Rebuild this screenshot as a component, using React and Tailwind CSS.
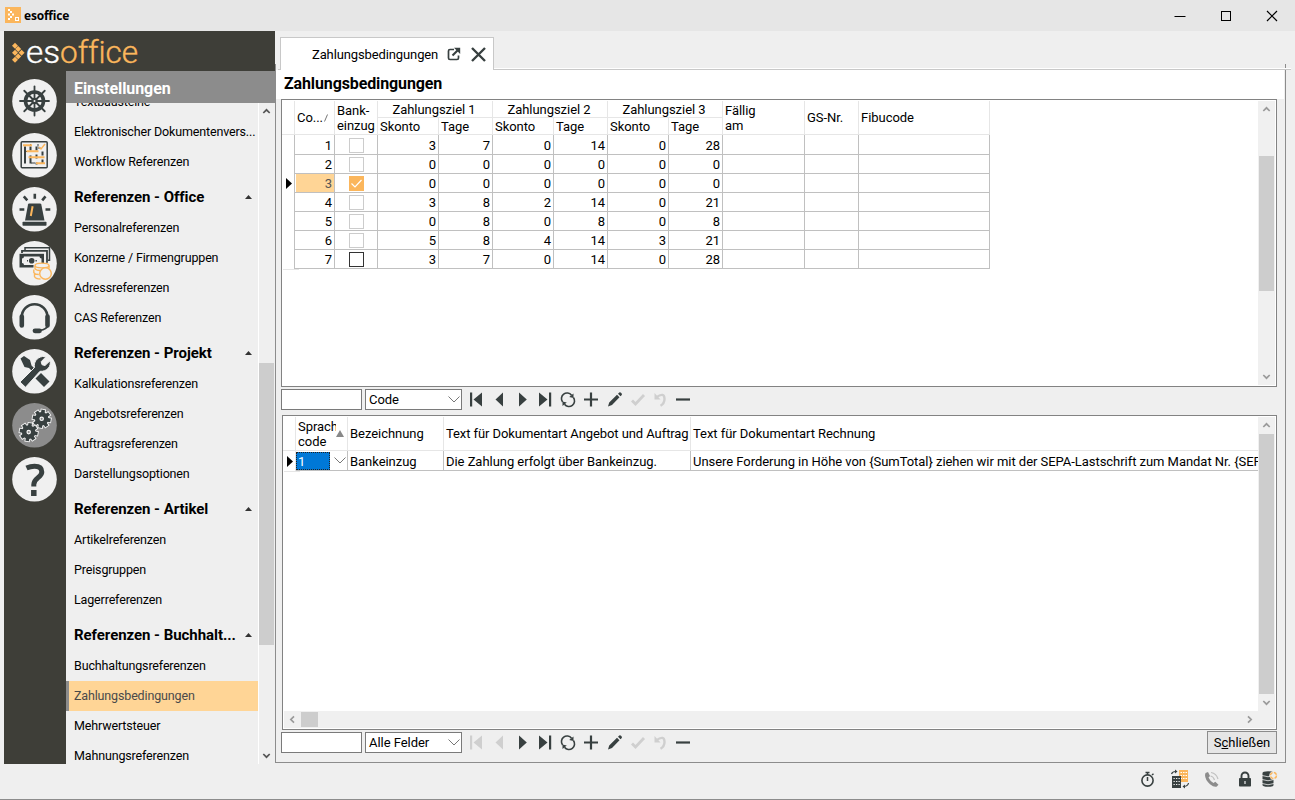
import React from "react";
import clsx from "clsx";

const DARK = "#384040";
const ORANGE = "#fbb65c";

// Menu entries of the settings sidebar
const menu = [
  { label: "Textbausteine" },
  { label: "Elektronischer Dokumentenvers..." },
  { label: "Workflow Referenzen" },
  { label: "Referenzen - Office", head: true },
  { label: "Personalreferenzen" },
  { label: "Konzerne / Firmengruppen" },
  { label: "Adressreferenzen" },
  { label: "CAS Referenzen" },
  { label: "Referenzen - Projekt", head: true },
  { label: "Kalkulationsreferenzen" },
  { label: "Angebotsreferenzen" },
  { label: "Auftragsreferenzen" },
  { label: "Darstellungsoptionen" },
  { label: "Referenzen - Artikel", head: true },
  { label: "Artikelreferenzen" },
  { label: "Preisgruppen" },
  { label: "Lagerreferenzen" },
  { label: "Referenzen - Buchhalt...", head: true },
  { label: "Buchhaltungsreferenzen" },
  { label: "Zahlungsbedingungen", active: true },
  { label: "Mehrwertsteuer" },
  { label: "Mahnungsreferenzen" },
];

// code, skonto/tage 1, skonto/tage 2, skonto/tage 3
const rows = [
  [1, 3, 7, 0, 14, 0, 28],
  [2, 0, 0, 0, 0, 0, 0],
  [3, 0, 0, 0, 0, 0, 0],
  [4, 3, 8, 2, 14, 0, 21],
  [5, 0, 8, 0, 8, 0, 8],
  [6, 5, 8, 4, 14, 3, 21],
  [7, 3, 7, 0, 14, 0, 28],
];

const COLS = "grid grid-cols-[13px_40px_43px_61px_54px_61px_54px_61px_54px_82px_54px_131px]";

function Wheel() {
  return (
    <g stroke={DARK} fill="none">
      {[0, 45, 90, 135].map((a) => (
        <path key={a} d="M22.5 8v29" strokeWidth="1.8" strokeLinecap="round" transform={`rotate(${a} 22.5 22.5)`} />
      ))}
      <circle cx="22.5" cy="22.5" r="9" strokeWidth="3.600" />
      <circle cx="22.5" cy="22.5" r="3.200" fill={DARK} stroke="none" />
      <circle cx="22.5" cy="22.5" r="1" fill="#f0f0f0" stroke="none" />
    </g>
  );
}

function Planner() {
  return (
    <g fill="none">
      <rect x="9.2" y="9.2" width="26" height="26" rx="1" stroke={DARK} strokeWidth="1.5" />
      <path d="M13 14v17M18.5 14v4M18.5 23v8M24.5 14v4M24.5 22v4M30.5 19v4M30.5 27v4M24.5 30v2" stroke={DARK} strokeWidth="2" />
      <path d="M18.5 11.5v2M26 11.5v2.5M26 15.5h2.5M12 19h4M19 30.5h4" stroke={DARK} strokeWidth="1" />
      <path d="M11 12.8h9M14.500 18.700h12M16.500 24.800h16M24 30.800h9" stroke={ORANGE} strokeWidth="2" />
      <path d="M27 14.500l2 2 4-5" stroke={ORANGE} strokeWidth="1.500" />
    </g>
  );
}

function Siren() {
  return (
    <g fill={DARK}>
      <path d="M17 17h11q1 0 1.300 1L32.500 34h-19.500L16 18q.2-1 1-1z" />
      <rect x="10.500" y="35.300" width="24" height="4" rx="0.800" />
      <path d="M18.800 29.500L20.600 19.800" stroke={ORANGE} strokeWidth="2" />
      <path d="M22.800 7.300v5M11.800 9.800l3.500 4M33.500 9.800l-3.300 4M7.500 23h4.800M33.500 23h4.800" stroke={DARK} strokeWidth="2.600" />
    </g>
  );
}

function Money() {
  return (
    <g fill="none">
      <path d="M13 9.700v-2.500h24.500v12.500h-1.500" stroke={DARK} strokeWidth="1.500" />
      <path d="M10 12.500v-2.200h25v12" stroke={DARK} strokeWidth="1.800" />
      <rect x="7.500" y="13.300" width="24.500" height="13.700" fill={DARK} />
      <path d="M12 16h15.500q0 2 2 2v4.500q-2 0-2 2H12q0-2-2-2V18q2 0 2-2z" fill="#f0f0f0" />
      <circle cx="19.700" cy="20.200" r="2.800" fill={DARK} />
      <path d="M15 20.200h1M23.500 20.200h1.300" stroke={DARK} strokeWidth="1.500" />
      <path d="M21.500 25q0-2.500 7-2.500t7 2.500v12q-4 2-8 1.500-6-.5-6-2z" fill="#f0f0f0" />
      <ellipse cx="30" cy="25" rx="7" ry="2.300" stroke={ORANGE} strokeWidth="1.300" />
      <path d="M23 25v3q1 2 5 2M21.800 29v3q1 2 5 2M22.500 33v3q1 2.500 6 2.500M37 25v3" stroke={ORANGE} strokeWidth="1.400" />
      <circle cx="33.500" cy="33" r="5.800" stroke={ORANGE} strokeWidth="1.400" fill="#f0f0f0" />
    </g>
  );
}

function Headset() {
  return (
    <g fill="none" stroke={DARK}>
      <path d="M9.800 27V22.500a12.800 12.800 0 0 1 25.600 0V27" strokeWidth="2.600" />
      <path d="M9.800 22v9M35.500 22v9" strokeWidth="4.600" strokeLinecap="round" />
      <path d="M36 31q-1.500 4-8 4.800" strokeWidth="1.800" />
      <path d="M23 36.300h4.500" strokeWidth="4.800" strokeLinecap="round" />
    </g>
  );
}

function Tools() {
  return (
    <g fill={DARK}>
      <path d="M8.500 10l3.500-2.500 6 4 1.500 5.500 4 4-2.500 2.500-4-4-4.500-1z" />
      <path d="M29 24.500l8.500 8.500-5.500 5.500-8.500-8.500z" />
      <path
        d="M8 33.500l14.500-14.500c-1-5 2-10 8-11l3.500.2-4.800 5 .8 3 3 .8 5-4.700c1.500 5.500-3 11-10 10.500L13.500 38.800z"
        stroke="#f0f0f0"
        strokeWidth="1"
      />
    </g>
  );
}

function Gear({ x, y, r }) {
  return (
    <g transform={`translate(${x} ${y})`}>
      <g stroke="#f5f5f5" strokeWidth="1.800" fill="#f5f5f5">
        {[0, 45, 90, 135].map((a) => (
          <rect key={a} x="-1.800" y={-r} width="3.600" height={r * 2} transform={`rotate(${a + 10})`} />
        ))}
        <circle r={r - 2.2} />
      </g>
      <g fill={DARK}>
        {[0, 45, 90, 135].map((a) => (
          <rect key={a} x="-1.800" y={-r} width="3.600" height={r * 2} transform={`rotate(${a + 10})`} />
        ))}
        <circle r={r - 2.2} />
      </g>
      <circle r="1.700" fill="#8c8c8c" stroke="#f5f5f5" strokeWidth="1.200" />
    </g>
  );
}

function Gears() {
  return (
    <g>
      <Gear x={29.7} y={16.3} r={9} />
      <Gear x={16.7} y={29.6} r={9} />
    </g>
  );
}

function Question() {
  return (
    <g fill="none" stroke={DARK} strokeWidth="5">
      <path d="M14.500 11.500q4-1.800 8-1.800c5 0 7.300 2.200 7.300 5.800 0 5.500-8 6-8 12.500v2" />
      <path d="M21.800 33.500v6" strokeWidth="5.500" />
    </g>
  );
}

const modules = [Wheel, Planner, Siren, Money, Headset, Tools, Gears, Question];

function Arrow({ dir, color = "#9a9a9a" }) {
  const rot = { up: 0, right: 90, down: 180, left: 270 }[dir];
  return (
    <svg width="9" height="9" viewBox="0 0 9 9" fill="none">
      <path d="M1.300 6l3.200-3.200L7.700 6" stroke={color} strokeWidth="1.700" transform={`rotate(${rot} 4.500 4.500)`} />
    </svg>
  );
}

function Sidebar() {
  return (
    <aside className="flex h-[733px] w-[271px] shrink-0 flex-col bg-[#3e3e38]">
      <div className="h-10 shrink-0">
        <svg width="271" height="40" viewBox="0 0 271 40">
          <g fill={ORANGE}>
            {[[11, 14.8], [14.2, 18], [17.6, 21.8], [11, 21.8], [14.2, 25.4], [11, 28.8]].map(([x, y]) => (
              <rect key={`${x}-${y}`} x={x - 2.1} y={y - 2.1} width="4.200" height="4.200" transform={`rotate(45 ${x} ${y})`} />
            ))}
          </g>
          <text x="22" y="31.500" fontSize="32" fontFamily="Roboto" fontWeight="300" fill="#ffffff" stroke="#ffffff" strokeWidth="0.400" textLength="34" lengthAdjust="spacingAndGlyphs">es</text>
          <text x="56" y="31.500" fontSize="32" fontFamily="Roboto" fontWeight="300" fill={ORANGE} stroke={ORANGE} strokeWidth="0.400" textLength="78" lengthAdjust="spacingAndGlyphs">office</text>
        </svg>
      </div>
      <div className="flex min-h-0 flex-1">
        <nav className="flex w-[62px] shrink-0 flex-col gap-[9px] pt-2 pl-2">
          {modules.map((Icon, i) => (
            <svg key={i} width="45" height="45" viewBox="0 0.500 45 45">
              <circle cx="22.500" cy="22.800" r="22.300" fill={i === 6 ? "#8c8c8c" : "#f0f0f0"} />
              <Icon />
            </svg>
          ))}
        </nav>
        <div className="flex w-[210px] shrink-0 flex-col bg-[#efefef]">
          <div className="flex h-8 shrink-0 items-center bg-[#8c8c8c] pt-1 pl-2 text-base font-bold tracking-[-0.08px] text-white">Einstellungen</div>
          <div className="flex min-h-0 flex-1">
            <ul className="flex w-48 flex-col overflow-hidden">
              {menu.map((m, i) =>
                m.head ? (
                  <li key={m.label} className="flex h-9 shrink-0 items-center justify-between pt-1 pr-1.5 pl-2 text-[15px] font-bold">
                    <span className="whitespace-nowrap">{m.label}</span>
                    <svg width="7" height="4" viewBox="0 0 7 4"><path d="M0 4L3.500 0 7 4z" fill="#333" /></svg>
                  </li>
                ) : (
                  <li
                    key={m.label}
                    className={clsx(
                      "flex h-[30px] shrink-0 items-center text-[12.5px] tracking-[-0.15px] whitespace-nowrap",
                      i === 0 && "-mt-4",
                      m.active ? "border-l-[3px] border-[#8c8c8c] bg-[#ffd596] pl-[5px] text-[#4a4a4a]" : "pl-2"
                    )}
                  >
                    {m.label}
                  </li>
                )
              )}
            </ul>
            <div className="flex w-[17px] flex-col border-l border-white">
              <div className="flex h-[17px] items-center pl-[3px]"><Arrow dir="up" color="#555" /></div>
              <div className="mt-[243px] h-[282px] w-[15px] bg-[#cdcdcd]" />
              <div className="mt-auto flex h-[17px] items-center pl-[3px]"><Arrow dir="down" color="#555" /></div>
            </div>
          </div>
        </div>
      </div>
    </aside>
  );
}

function Check({ checked, strong }) {
  if (checked) {
    return (
      <svg width="15" height="15" viewBox="0 0 15 15" fill="none">
        <rect width="15" height="15" fill={ORANGE} />
        <path d="M2.500 7.500l3.500 3.500 6.500-7" stroke="#fff" strokeWidth="1.200" />
      </svg>
    );
  }
  return <span className={clsx("h-[15px] w-[15px] border bg-white", strong ? "border-[#333]" : "border-[#cccccc]")} />;
}

function Hd({ className, children }) {
  return <div className={clsx("border-r border-b border-[#e6e6e6]", className)}>{children}</div>;
}

function TermsGrid() {
  return (
    <div className="flex h-[288px] w-[996px] border border-[#828282] bg-white">
      <div className="min-w-0 flex-1 pt-px">
        <div className={clsx(COLS, "h-[34px] grid-rows-[17px_17px] leading-[15px]")}>
          <Hd className="row-span-2" />
          <Hd className="row-span-2 flex items-center gap-px pl-0.5">
            <span>Co...</span>
            <svg width="4" height="8" viewBox="0 0 4 8"><path d="M.5 7.500L3.500.5" stroke="#777" /></svg>
          </Hd>
          <Hd className="row-span-2 pt-0.5 pl-0.5">Bank-<br />einzug</Hd>
          {[1, 2, 3].map((n) => (
            <Hd key={n} className="col-span-2 pt-px pr-0.5 text-center">Zahlungsziel {n}</Hd>
          ))}
          <Hd className="row-span-2 pt-0.5 pl-0.5">Fällig<br />am</Hd>
          <Hd className="row-span-2 flex items-center pl-0.5">GS-Nr.</Hd>
          <Hd className="row-span-2 flex items-center pl-0.5">Fibucode</Hd>
          {[1, 2, 3].map((n) => (
            <React.Fragment key={n}>
              <Hd className="pt-px pl-0.5">Skonto</Hd>
              <Hd className="pt-px pl-0.5">Tage</Hd>
            </React.Fragment>
          ))}
        </div>
        {rows.map((r, i) => (
          <div key={r[0]} className={clsx(COLS, i === 0 ? "h-5" : "h-[19px]")}>
            <div className="flex items-center border-r border-[#c0c0c0] pl-1">
              {r[0] === 3 && <svg width="6" height="11" viewBox="0 0 6 11"><path d="M0 0l6 5.500L0 11z" fill="#000" /></svg>}
            </div>
            <div className="flex border-r border-b border-[#c0c0c0] pl-px">
              <div className={clsx("flex flex-1 items-end justify-end pr-0.5 leading-[17px]", r[0] === 3 && "bg-[#ffd596] text-[#555]")}>{r[0]}</div>
            </div>
            <div className="flex items-end justify-center border-r border-b border-[#c0c0c0] pb-px">
              <Check checked={r[0] === 3} strong={r[0] === 7} />
            </div>
            {r.slice(1).map((v, c) => (
              <div key={c} className="flex items-end justify-end border-r border-b border-[#c0c0c0] pr-0.5 leading-[17px]">{v}</div>
            ))}
            <div className="border-r border-b border-[#c0c0c0]" />
            <div className="border-r border-b border-[#c0c0c0]" />
            <div className="border-r border-b border-[#c0c0c0]" />
          </div>
        ))}
        <div className="ml-px h-px w-4 bg-[#e6e6e6]" />
      </div>
      <div className="my-px mr-px flex w-[17px] flex-col items-center bg-[#f0f0f0]">
        <div className="flex h-[17px] items-center"><Arrow dir="up" /></div>
        <div className="mt-[38px] h-[135px] w-[15px] bg-[#cdcdcd]" />
        <div className="mt-auto flex h-[17px] items-center"><Arrow dir="down" /></div>
      </div>
    </div>
  );
}

function Ico({ x, off, children }) {
  const col = off ? "#cfcfcf" : DARK;
  return (
    <g transform={`translate(${x} 10.500)`} fill={col} stroke={col} strokeWidth="0">
      {children}
    </g>
  );
}

function Toolbar({ field, atStart }) {
  return (
    <div className="flex items-center">
      <input className="h-[21px] w-[81px] border border-[#7a7a7a] bg-white" />
      <div className="ml-[3px] flex h-[21px] w-[97px] items-center justify-between border border-[#7a7a7a] bg-white pr-px pl-[3px]">
        <span>{field}</span>
        <svg width="12" height="7" viewBox="0 0 12 7" fill="none"><path d="M.5.5L6 6 11.500.5" stroke="#777" /></svg>
      </div>
      <svg className="ml-1" width="230" height="21" viewBox="466 0 230 21">
        <Ico x={477} off={atStart}><path d="M-7-7h2.200V7h-2.200zM5-7V7L-3.500 0z" /></Ico>
        <Ico x={499.5} off={atStart}><path d="M3.500-7V7L-4 0z" /></Ico>
        <Ico x={522.5}><path d="M-3.500-7V7L4.300 0z" /></Ico>
        <Ico x={545}><path d="M-6-7V7L2.500 0zM4-7h2.200V7H4z" /></Ico>
        <Ico x={568}>
          <g fill="none" strokeWidth="1.600">
            <path d="M-5.400 2.500A5.600 5.600 0 0 1 3.500-4.300M5.400-2A5.600 5.600 0 0 1-3.500 4.800" />
          </g>
          <path d="M5.500-6v4.500l-4.300-1zM-5.500 6.500V2l4.300 1z" />
        </Ico>
        <Ico x={591}><path d="M-7-1.100h5.900V-7h2.200v5.900H7v2.200H1.100V7h-2.200V1.100H-7z" /></Ico>
        <Ico x={615}><path d="M-7 7l1.200-4L2-4.800 4.500-2.300-3 5.500zM3-5.800l1.300-1.300q1-.5 2 .5t.5 2L5.500-3.300z" /></Ico>
        <Ico x={638} off><path d="M-6 1l3.500 3.500L6-4.500" fill="none" strokeWidth="2.800" /></Ico>
        <Ico x={660} off>
          <path d="M-4-2Q4.500-8 4.500-.5 4.500 4 .5 6.300" fill="none" strokeWidth="2.400" />
          <path d="M-5.500-6.500v6.500h6z" />
        </Ico>
        <Ico x={683}><path d="M-7-1.100H7v2.200H-7z" /></Ico>
      </svg>
    </div>
  );
}

function TextGrid() {
  const cols = "grid grid-cols-[13px_52px_96px_247px_minmax(0,1fr)]";
  return (
    <div className="ml-px flex h-[315px] w-[995px] border border-[#828282] bg-white">
      <div className="flex min-w-0 flex-1 flex-col pt-px">
        <div className={clsx(cols, "h-[34px] whitespace-nowrap")}>
          <Hd />
          <Hd className="flex items-center pl-0.5 leading-[15px]">
            <div className="w-[38px] overflow-hidden">Sprach<br />code</div>
            <svg width="8" height="7" viewBox="0 0 8 7"><path d="M0 7l4-7 4 7z" fill="#888" /></svg>
          </Hd>
          <Hd className="flex items-center pl-0.5">Bezeichnung</Hd>
          <Hd className="flex items-center pl-0.5 tracking-[-0.08px]">Text für Dokumentart Angebot und Auftrag</Hd>
          <div className="flex items-center border-b border-[#e6e6e6] pl-0.5">Text für Dokumentart Rechnung</div>
        </div>
        <div className={clsx(cols, "h-5 leading-[17px] whitespace-nowrap")}>
          <div className="flex items-center border-r border-[#e6e6e6] pl-1">
            <svg width="6" height="11" viewBox="0 0 6 11"><path d="M0 0l6 5.500L0 11z" fill="#000" /></svg>
          </div>
          <div className="flex items-center justify-between border-r border-b border-[#c0c0c0] pr-px">
            <span className="h-[18px] w-[34px] border border-dotted border-[#222] bg-[#0078d7] pl-px text-white">1</span>
            <svg width="12" height="7" viewBox="0 0 12 7" fill="none"><path d="M.5.5L6 6 11.500.5" stroke="#777" /></svg>
          </div>
          <div className="flex items-center border-r border-b border-[#c0c0c0] pt-0.5 pl-0.5">Bankeinzug</div>
          <div className="flex items-center border-r border-b border-[#c0c0c0] pt-0.5 pl-0.5">Die Zahlung erfolgt über Bankeinzug.</div>
          <div className="flex items-center overflow-hidden border-b border-[#c0c0c0] pt-0.5 pl-0.5">
            Unsere Forderung in Höhe von {"{SumTotal}"} ziehen wir mit der SEPA-Lastschrift zum Mandat Nr. {"{SEPA_Mandat}"}
          </div>
        </div>
        <div className="ml-px h-px w-4 bg-[#e6e6e6]" />
        <div className="mt-auto mb-px ml-px flex h-[17px] items-center bg-[#f0f0f0]">
          <div className="flex w-[17px] justify-center"><Arrow dir="left" /></div>
          <div className="h-[15px] w-[17px] bg-[#cdcdcd]" />
          <div className="ml-auto flex w-[17px] justify-center"><Arrow dir="right" /></div>
        </div>
      </div>
      <div className="my-px mr-px flex w-[17px] flex-col items-center bg-[#f0f0f0]">
        <div className="flex h-[17px] items-center"><Arrow dir="up" /></div>
        <div className="h-[260px] w-[15px] bg-[#cdcdcd]" />
        <div className="flex h-[17px] items-center"><Arrow dir="down" /></div>
      </div>
    </div>
  );
}

function StatusIcons() {
  return (
    <svg className="mt-1 mr-[15px]" width="140" height="22" viewBox="1140 768 140 22" fill="none">
      {/* stopwatch */}
      <circle cx="1147.500" cy="780.500" r="5.600" stroke={DARK} strokeWidth="1.600" />
      <path d="M1147.500 777v4M1145.500 772.500h4M1147.500 773v2M1152 775l1.500-1.300" stroke={DARK} strokeWidth="1.500" />
      {/* buildings */}
      <rect x="1179" y="770" width="9" height="12" fill={ORANGE} />
      <path d="M1180.500 772.500h7M1180.500 775.500h7M1180.500 778.500h7" stroke="#fff" strokeWidth="1.200" strokeDasharray="1.500 1" />
      <path d="M1172 776h9v12h-9z" fill={DARK} />
      <path d="M1173.500 778.500h7M1173.500 781.500h7M1173.500 784.500h7" stroke="#efefef" strokeWidth="1" strokeDasharray="1.300 1.200" />
      <path d="M1171.500 774q1-2.500 4-2.500M1188.500 783q-.5 3-4.500 3.500" stroke={DARK} strokeWidth="1.200" />
      <path d="M1175 769.500l2.500 2-2.500 2zM1185 784.500l-2.500 2 2.500 2z" fill={DARK} />
      {/* phone */}
      <path d="M1205.500 773l2.500-1 2 4-1.500 1.500q1.500 3.500 5 5.500l1.800-1.300 3.200 3-2 2q-2.500.8-6.500-2.500-5-4.500-5-9.200z" fill="#8c8c8c" />
      <path d="M1210.500 776q3 .5 4 4M1211 772.500q5.500 1 7 6.500" stroke="#c0c0c0" strokeWidth="1.200" />
      {/* lock */}
      <rect x="1239" y="778" width="12" height="8.500" rx="0.800" fill={DARK} />
      <path d="M1241.500 778v-2a3.500 3.500 0 0 1 7 0v2" stroke={DARK} strokeWidth="1.900" />
      <path d="M1245 781v3" stroke="#efefef" strokeWidth="1.200" />
      {/* database */}
      <path d="M1262.500 773q0-1.800 5.500-1.800t5.500 1.800v12q0 1.800-5.500 1.800t-5.500-1.800z" fill={DARK} />
      <path d="M1262 775.500q6 2.500 12 0M1262 779.500q6 2.500 12 0M1262 783.500q6 2.500 12 0" stroke="#efefef" strokeWidth="0.800" />
      <circle cx="1273.500" cy="775.500" r="4.200" fill="#efefef" />
      <circle cx="1273.500" cy="775.500" r="3" stroke={ORANGE} strokeWidth="1.500" strokeDasharray="3.500 1.200" />
    </svg>
  );
}

export default function App() {
  return (
    <div className="flex h-[800px] w-[1295px] flex-col overflow-hidden border-b border-[#8c8c8c] bg-[#efefef] font-['Roboto',sans-serif] text-[13px] tracking-[-0.045px] text-black">
      <header className="flex h-[31px] shrink-0 items-center bg-[#e6e6e6] pl-[5px]">
        <svg className="-mt-0.5" width="16" height="16" viewBox="0 0 16 16">
          <rect width="16" height="16" fill={ORANGE} />
          <path d="M3 2h2v2H3zM5 4h2v2H5zM7 6.500h2v2H7zM5 9h2v2H5zM3 11h2v2H3zM3 6.500h2v2H3z" fill="#fff" />
          <rect x="10.500" y="10.500" width="3" height="3" fill="none" stroke="#fff" />
        </svg>
        <span className="ml-[3px] font-['Open_Sans',sans-serif] text-xs font-bold tracking-[-0.2px]">esoffice</span>
        <svg className="ml-auto" width="130" height="30" viewBox="1165 0 130 30" fill="none" stroke="#000">
          <path d="M1174.500 15.500h11" />
          <rect x="1221.500" y="10.500" width="9" height="9" />
          <path d="M1267 10l10 10M1277 10l-10 10" strokeWidth="1.200" />
        </svg>
      </header>

      <div className="flex h-[733px] shrink-0 pl-1">
        <Sidebar />

        <main className="w-[1016px]">
          <div className="flex h-[39px] items-end">
            <div className="flex h-1.5 w-[5px] border-l border-[#8c8c8c] pl-0.5">
              <div className="mt-auto h-px flex-1 bg-[#c8c8c8]" />
            </div>
            <div className="flex h-[33px] w-[214px] items-center border-x border-t border-[#c8c8c8] bg-white pl-[31px]">
              <span className="w-[127px] pt-px tracking-[-0.12px]">Zahlungsbedingungen</span>
              <svg className="ml-2" width="14" height="14" viewBox="0 0 14 14" fill="none" stroke={DARK}>
                <path d="M7 2.500H3Q1.500 2.500 1.500 4v7q0 1.500 1.500 1.500h7q1.500 0 1.500-1.500V8.500" strokeWidth="1.700" />
                <path d="M5.500 8.500l5-5" strokeWidth="2.200" />
                <path d="M7 .8H13.200V7z" fill={DARK} stroke="none" />
              </svg>
              <svg className="ml-2.5" width="15" height="15" viewBox="0 0 15 15"><path d="M1 1l13 13M14 1L1 14" stroke={DARK} strokeWidth="2.400" /></svg>
            </div>
            <div className="flex h-1.5 flex-1 flex-col justify-end">
              <div className="mr-[5px] flex-1 border-r border-[#8c8c8c]" />
              <div className="h-px bg-white" />
              <div className="h-px bg-[#c8c8c8]" />
            </div>
          </div>

          <div className="h-[693px] w-[1011px] border-x border-b border-[#8c8c8c]">
            <h1 className="mr-px h-[29px] bg-white pl-2 text-base leading-[28px] font-bold tracking-[-0.12px]">Zahlungsbedingungen</h1>
            <div className="pl-[5px]">
              <TermsGrid />
              <div className="flex h-7 items-start pt-0.5"><Toolbar field="Code" /></div>
              <TextGrid />
              <div className="flex w-[996px] items-center justify-between pt-px">
                <Toolbar field="Alle Felder" atStart />
                <button className="h-[23px] w-[70px] border border-[#8c8c8c] bg-[#e6e6e6]">S<u>c</u>hließen</button>
              </div>
            </div>
          </div>
        </main>
      </div>

      <footer className="flex flex-1 justify-end">
        <StatusIcons />
      </footer>
    </div>
  );
}
